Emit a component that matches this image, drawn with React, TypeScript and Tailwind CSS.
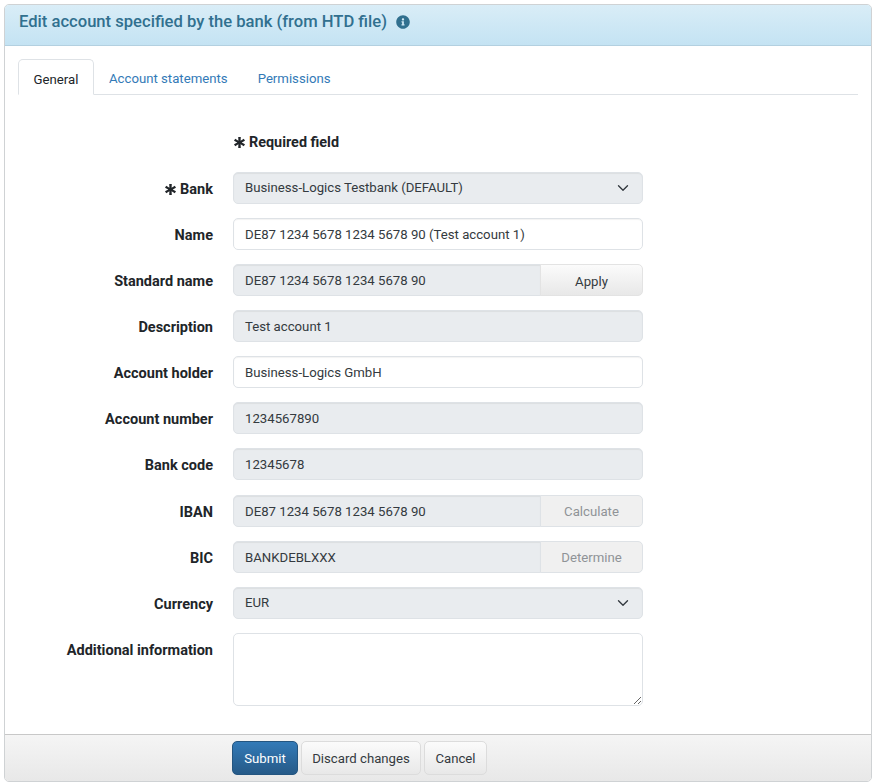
import { ChevronDown } from "lucide-react";
import { FaInfoCircle } from "react-icons/fa";
import type { ReactNode } from "react";

const font = "font-['Roboto',sans-serif]";

function Star() {
  return (
    <svg viewBox="0 0 12 12" className="w-[11px] h-[11px] inline-block mr-[4px] align-[-1px]" fill="#212529">
      <path d="M4.6 0h2.8l-.2 4L10.7 1.8l1.3 2.4L8.4 6l3.6 1.8-1.3 2.4L7.2 8l.2 4H4.6l.2-4-3.5 2.2L0 7.8 3.6 6 0 4.2l1.3-2.4L4.8 4z" />
    </svg>
  );
}

function Row({ label, star, children, mb = "mb-[14px]" }: { label: string; star?: boolean; children: ReactNode; mb?: string }) {
  return (
    <div className={`flex ${mb}`}>
      <label className="w-[215px] pr-[20px] text-right font-bold text-[14.5px] leading-[21px] pt-[7px] text-[#212529] shrink-0 whitespace-nowrap">
        {star && <Star />}
        {label}
      </label>
      {children}
    </div>
  );
}

function ReadOnly({ value }: { value: string }) {
  return (
    <div className="w-[410px] h-[32px] bg-[#e9ecef] border border-[#dee2e6] rounded-[5px] px-[11px] text-[13.2px] leading-[32px] text-[#343a40] shadow-[inset_0_1px_1px_rgba(0,0,0,0.06)]">
      {value}
    </div>
  );
}

function Editable({ value }: { value: string }) {
  return (
    <div className="w-[410px] h-[32px] bg-white border border-[#dee2e6] rounded-[5px] px-[11px] text-[13.2px] leading-[32px] text-[#343a40] shadow-[inset_0_1px_1px_rgba(0,0,0,0.05)]">
      {value}
    </div>
  );
}

function SelectBox({ value }: { value: string }) {
  return (
    <div className="w-[410px] h-[32px] bg-[#e9ecef] border border-[#dee2e6] rounded-[5px] pl-[11px] pr-[10px] flex items-center justify-between text-[13.2px] text-[#343a40] shadow-[inset_0_1px_1px_rgba(0,0,0,0.06)]">
      <span>{value}</span>
      <ChevronDown size={18} strokeWidth={1.8} className="text-[#343a40]" />
    </div>
  );
}

function WithButton({ value, button, disabled }: { value: string; button: string; disabled?: boolean }) {
  return (
    <div className="w-[410px] h-[32px] flex">
      <div className="flex-1 bg-[#e9ecef] border border-[#dee2e6] rounded-l-[5px] px-[11px] text-[13.2px] leading-[32px] text-[#343a40] shadow-[inset_0_1px_1px_rgba(0,0,0,0.06)]">
        {value}
      </div>
      <button
        className={
          disabled
            ? "w-[103px] -ml-px pt-[2px] border border-[#dee2e6] rounded-r-[5px] bg-[#f0f0f0] text-[13.2px] text-[#8f9397]"
            : "w-[103px] -ml-px pt-[3px] border border-[#e3e3e3] rounded-r-[5px] bg-gradient-to-b from-[#fbfbfb] to-[#e8e8e8] text-[13.2px] text-[#343a40]"
        }
      >
        {button}
      </button>
    </div>
  );
}

export default function App() {
  return (
    <div className={`${font} w-[878px] h-[783px] bg-white pt-[4px] pl-[4px]`}>
      <div className="w-[868px] h-[778px] border border-[#cfd2d4] rounded-[5px] flex flex-col overflow-hidden">
        {/* Header */}
        <div className="h-[41px] shrink-0 bg-gradient-to-b from-[#d9edf7] to-[#c4e3f3] border-b border-[#b3d0e0] pl-[14px] pb-[6px] flex items-center gap-[9px]">
          <span className="text-[16.6px] font-medium text-[#31708f]">Edit account specified by the bank (from HTD file)</span>
          <FaInfoCircle size={14} className="text-[#31708f]" />
        </div>

        {/* Tabs */}
        <div className="flex-1 pt-[13px] px-[13px]">
          <div className="flex h-[36px] border-b border-[#dee2e6] text-[13.2px]">
            <div className="h-[36px] w-[76px] text-center leading-[39px] border border-[#dee2e6] border-b-white rounded-t-[5px] bg-white text-[#212529]">
              General
            </div>
            <div className="px-[15px] leading-[39px] text-[#337ab7]">Account statements</div>
            <div className="px-[15px] leading-[39px] text-[#337ab7]">Permissions</div>
          </div>

          <div className="pt-[37px]">
            <div className="pl-[216px] mb-[19px] font-bold text-[14.4px] leading-[21px] text-[#212529]">
              <Star />
              Required field
            </div>
            <Row label="Bank" star>
              <SelectBox value="Business-Logics Testbank (DEFAULT)" />
            </Row>
            <Row label="Name">
              <Editable value="DE87 1234 5678 1234 5678 90 (Test account 1)" />
            </Row>
            <Row label="Standard name">
              <WithButton value="DE87 1234 5678 1234 5678 90" button="Apply" />
            </Row>
            <Row label="Description">
              <ReadOnly value="Test account 1" />
            </Row>
            <Row label="Account holder">
              <Editable value="Business-Logics GmbH" />
            </Row>
            <Row label="Account number">
              <ReadOnly value="1234567890" />
            </Row>
            <Row label="Bank code" mb="mb-[15px]">
              <ReadOnly value="12345678" />
            </Row>
            <Row label="IBAN">
              <WithButton value="DE87 1234 5678 1234 5678 90" button="Calculate" disabled />
            </Row>
            <Row label="BIC">
              <WithButton value="BANKDEBLXXX" button="Determine" disabled />
            </Row>
            <Row label="Currency">
              <SelectBox value="EUR" />
            </Row>
            <Row label="Additional information" mb="mb-0">
              <textarea
                readOnly
                className="w-[410px] h-[73px] bg-white border border-[#dee2e6] rounded-[5px] outline-none block"
              />
            </Row>
          </div>
        </div>

        {/* Footer */}
        <div className="h-[47px] shrink-0 bg-gradient-to-b from-[#f5f5f5] to-[#e8e8e8] border-t border-[#c8c8c8] pl-[227px] pt-[6px] flex gap-[3px] items-start text-[13.2px]">
          <button className="w-[66px] h-[34px] pt-[2px] rounded-[5px] border border-[#245580] bg-gradient-to-b from-[#337ab7] to-[#265a88] text-white">
            Submit
          </button>
          <button className="w-[120px] h-[34px] pt-[2px] rounded-[5px] border border-[#dcdcdc] bg-gradient-to-b from-[#fbfbfb] to-[#e8e8e8] text-[#343a40]">
            Discard changes
          </button>
          <button className="w-[63px] h-[34px] pt-[2px] rounded-[5px] border border-[#dcdcdc] bg-gradient-to-b from-[#fbfbfb] to-[#e8e8e8] text-[#343a40]">
            Cancel
          </button>
        </div>
      </div>
    </div>
  );
}
